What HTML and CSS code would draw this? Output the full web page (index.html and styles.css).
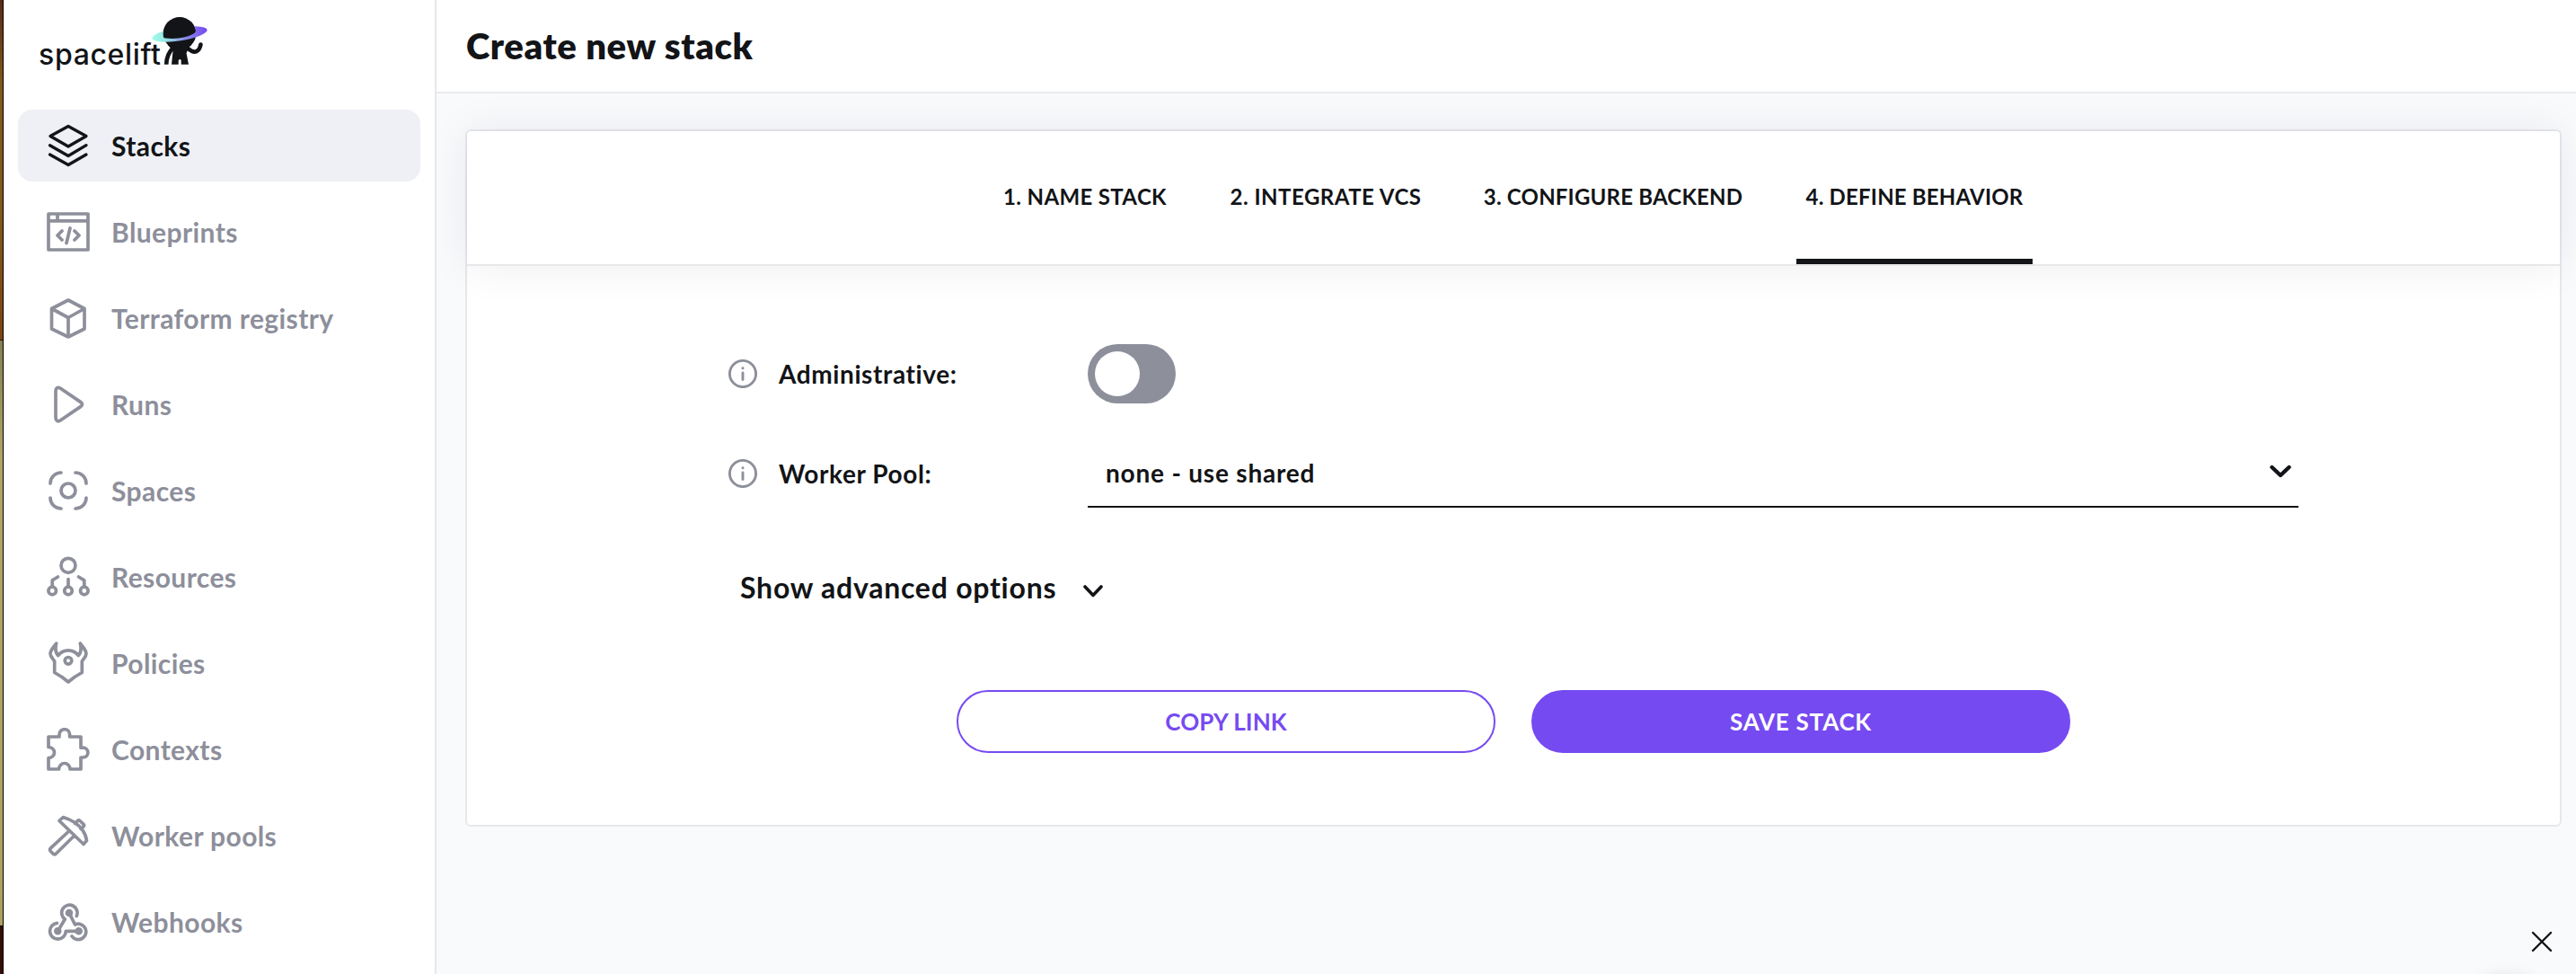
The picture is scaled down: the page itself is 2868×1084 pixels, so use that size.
FILE: index.html
```html
<!DOCTYPE html>
<html lang="en">
<head>
<meta charset="utf-8">
<title>Create new stack</title>
<link rel="stylesheet" href="styles.css">
</head>
<body>
<div class="app">
  <div class="edge" aria-hidden="true"><i class="edge-brown"></i><i class="edge-olive"></i><i class="edge-maroon"></i></div>
  <aside class="sidebar">
    <a class="logo">
      <svg width="200" height="70" viewBox="0 0 200 70">
        <defs>
          <linearGradient id="ring" x1="129" x2="191" y1="0" y2="0" gradientUnits="userSpaceOnUse">
            <stop offset="0" stop-color="#9fffe6"/><stop offset=".2" stop-color="#98eae4"/><stop offset=".55" stop-color="#8a93e6"/><stop offset="1" stop-color="#7548f3"/>
          </linearGradient>
        </defs>
        <text class="logo-text" x="3" y="55.6" textLength="136">spacelift</text>
        <circle cx="160" cy="21.3" r="18.3"/>
        <path d="M147 34h25l-4.5 9 2.5 12.700h-8.300v-4.200a1.200 1.200 0 0 0-3 0v4.200H151l1.500-15z"/>
        <path class="limb" d="M153 37Q145.500 44 145.200 55.700"/>
        <path class="limb round" d="M170 38.500C177 44.500 182 41 183.500 33.500"/>
        <ellipse cx="160" cy="22" rx="31" ry="7.400" transform="rotate(-9 160 22)" fill="url(#ring)"/>
        <path d="M142 25.500A18.300 18.300 0 1 1 178 18.600Q177 22.500 166 25.200T144.500 26.500Q142.500 26.500 142 25.500Z"/>
      </svg>
    </a>
    <nav class="nav">
      <a class="nav-item active"><svg class="ico thin" viewBox="0 0 48 48"><path d="M24 2.500 44 13.500 24 25 4 13.500ZM3.500 23.700 24 35.500 44 23.700M3.500 34 24 45.500 44 34"/></svg>Stacks</a>
      <a class="nav-item"><svg class="ico" viewBox="0 0 48 48"><path d="M2 4h44v40H2ZM2 11.800h44M12 4v8M17 23l-5 5 5 5M31 23l5 5-5 5M26 20l-4 16.500"/></svg>Blueprints</a>
      <a class="nav-item"><svg class="ico" viewBox="0 0 48 48"><path d="M24 4 42 13.500V36L24 45 5.500 36V13.500ZM5.500 13.500 24 23.500 42 13.500M24 23.500V45"/></svg>Terraform registry</a>
      <a class="nav-item"><svg class="ico" viewBox="0 0 48 48"><path d="M10 9v30c0 3.400 2.700 4.500 5 3l23-15.600c1.900-1.300 1.900-3.500 0-4.800L15 6c-2.300-1.500-5-.4-5 3Z"/></svg>Runs</a>
      <a class="nav-item"><svg class="ico" viewBox="0 0 48 48"><path d="M16 4A12 12 0 0 0 4 16M32 4a12 12 0 0 1 12 12M44 32a12 12 0 0 1-12 12M16 44A12 12 0 0 1 4 32"/><circle cx="24" cy="24" r="8"/></svg>Spaces</a>
      <a class="nav-item"><svg class="ico" viewBox="0 0 48 48"><circle cx="24" cy="11.300" r="8"/><circle cx="6.200" cy="39.500" r="4.300"/><circle cx="24" cy="39.500" r="4.300"/><circle cx="41.800" cy="39.500" r="4.300"/><path d="M24 26.500V35M12.500 24 6.200 27.800V35M35.500 24l6.300 3.800V35"/></svg>Resources</a>
      <a class="nav-item"><svg class="ico" viewBox="0 0 48 48"><path d="M10.700 2C8 6 4 9.500 4 13.500c0 3 2.500 5 4.700 8.500v12.500L17 39.500l7 5.500 7-5.500 8.300-5V22c2.200-3.500 4.700-5.500 4.700-8.500C44 9.500 40 6 37.300 2c1.300 5 1.700 9.500-2 13.500-6-7.500-16.600-7.500-22.600 0C9 11.500 9.400 7 10.700 2Z"/><circle cx="24" cy="21.300" r="3.800"/></svg>Policies</a>
      <a class="nav-item"><svg class="ico" viewBox="0 0 48 48"><path d="M2 10h12V7.500a5.800 5.800 0 0 1 11.600 0V10H38v12.200h2.500a5.300 5.300 0 0 1 0 10.800H38v13H26a6.200 6.500 0 0 0-12.400 0H2V33.500a6.500 6 0 0 0 0-12Z"/></svg>Contexts</a>
      <a class="nav-item"><svg class="ico" viewBox="0 0 48 48"><path d="M25.300 18.500 4.200 38.200q-1.200 1.500 0 3l3 3q1.500 1.200 3 0L31 23.800M14 7.500 18.300 3.500Q33 8 40 18q4 6 4.500 11.500L41 33.500ZM31.500 10.500l3-3q1.200-1.200 2.500 0l4 3.800q1.200 1.200 0 2.500L38 16.500"/></svg>Worker pools</a>
      <a class="nav-item"><svg class="ico" viewBox="0 0 48 48"><path d="M12.300 34.300 20.300 21A8.700 8.700 0 1 1 33.300 17.500M25 14l6.500 13a8.700 8.700 0 1 1-3.500 13M35.700 34.300H21.300A8.900 8.900 0 1 1 11.500 25.400"/><g class="dot"><circle cx="25" cy="14" r="3.500"/><circle cx="12.300" cy="34.300" r="3.500"/><circle cx="35.700" cy="34.300" r="3.500"/></g></svg>Webhooks</a>
    </nav>
  </aside>
  <main class="main">
    <header class="topbar"><h1>Create new stack</h1></header>
    <section class="card">
      <ol class="steps">
        <li class="step s1">1. NAME STACK</li>
        <li class="step s2">2. INTEGRATE VCS</li>
        <li class="step s3">3. CONFIGURE BACKEND</li>
        <li class="step s4 current">4. DEFINE BEHAVIOR</li>
      </ol>
      <form class="form">
        <div class="row admin">
          <svg class="info" viewBox="0 0 32 32"><circle cx="16" cy="16" r="14.600"/><path d="M16 15v7.500M16 9.800v.1"/></svg>
          <span class="label">Administrative:</span>
          <span class="toggle"><i></i></span>
        </div>
        <div class="row pool">
          <svg class="info" viewBox="0 0 32 32"><circle cx="16" cy="16" r="14.600"/><path d="M16 15v7.500M16 9.800v.1"/></svg>
          <span class="label">Worker Pool:</span>
          <span class="select">none - use shared<svg width="24" height="16" viewBox="0 0 24 16"><path d="M2.500 3 12 12 21.500 3"/></svg></span>
        </div>
        <div class="advanced">Show advanced options<svg width="22" height="14" viewBox="0 0 22 14"><path d="M2 2 11 11.500 20 2"/></svg></div>
        <div class="actions">
          <button type="button" class="btn outline">COPY LINK</button>
          <button type="button" class="btn solid">SAVE STACK</button>
        </div>
      </form>
    </section>
  </main>
  <div class="bubble" aria-hidden="true"></div>
  <svg class="close" viewBox="0 0 24 24"><path d="M2 2l20 20M22 2 2 22"/></svg>
</div>
</body>
</html>
```
FILE: styles.css
```css
* { box-sizing: border-box; }
body {
  margin: 0;
  font-family: Lato, "Open Sans", sans-serif;
  font-weight: 700;
  font-variant-ligatures: none;
  color: #121417;
}
svg { display: block; flex: none; }
.app {
  position: relative;
  display: flex;
  height: 1084px;
  overflow: hidden;
  background: #f9fafc;
}

/* strip at the window's left edge */
.edge {
  display: flex;
  flex-direction: column;
  width: 4px;
  flex: none;
  border-right: 1px solid #000;
}
.edge-brown { height: 379px; background: linear-gradient(#5a2b18, #80591a 25%, #84591a 60%, #7d4411); border-bottom: 1px solid #2a1505; }
.edge-olive { height: 651px; background: linear-gradient(#858050, #b0a565 20%, #aca260); }
.edge-maroon { flex: 1; background: #370c05; border-top: 1px solid #150301; }

/* sidebar */
.sidebar {
  width: 482px;
  flex: none;
  padding: 16px 16px 0;
  background: #fff;
  border-right: 2px solid #e7e7ec;
  position: relative;
  z-index: 2;
}
.logo { display: block; height: 106px; padding-left: 20px; fill: #121417; }
.logo-text { font: 500 32px Inter, sans-serif; }
.limb { fill: none; stroke: #121417; stroke-width: 4.6; }
.round { stroke-linecap: round; }
.nav { display: flex; flex-direction: column; gap: 16px; }
.nav-item {
  display: flex;
  align-items: center;
  gap: 24px;
  height: 80px;
  width: 448px;
  padding-left: 32px;
  border-radius: 16px;
  font-size: 30px;
  letter-spacing: .4px;
  color: #8d8f9b;
}
.nav-item.active { background: #eff0f5; color: #121417; }
.ico {
  width: 48px;
  height: 48px;
  fill: none;
  stroke: currentColor;
  stroke-width: 3.7;
  stroke-linecap: round;
  stroke-linejoin: round;
}
.thin { stroke-width: 3.3; }
.dot { fill: currentColor; stroke-width: 1.5; }

/* main area */
.main { flex: 1; min-width: 0; }
.topbar {
  position: relative;
  z-index: 1;
  height: 104px;
  display: flex;
  align-items: center;
  padding-left: 33px;
  background: #fff;
  border-bottom: 2px solid #e9eaec;
}
h1 { margin: 0; font-size: 40px; line-height: 48px; font-weight: 800; letter-spacing: .6px; }
.card {
  margin: 40px 16px 0 32px;
  height: 776px;
  background: #fff;
  border: 2px solid #e7e8ec;
  border-radius: 6px;
}
.steps {
  margin: 0;
  padding: 0;
  list-style: none;
  display: flex;
  justify-content: center;
  gap: 51px;
  height: 150px;
  background: #fff;
  border-bottom: 2px solid #e7e8ea;
  border-radius: 4px 4px 0 0;
  box-shadow: 0 0 48px rgba(20, 22, 50, .08);
}
.step {
  display: flex;
  align-items: center;
  justify-content: center;
  height: 148px;
  padding-top: 3px;
  font-size: 24px;
  letter-spacing: .2px;
  white-space: nowrap;
  border-bottom: 6px solid transparent;
}
.s1 { width: 202px; letter-spacing: .35px; }
.s2 { width: 232px; letter-spacing: .5px; }
.s3 { width: 306px; }
.s4 { width: 263px; }
.step.current { border-color: #121417; }
.form { padding: 87px 291px 0; }
.row { display: flex; align-items: center; }
.admin { height: 66px; }
.pool { height: 76px; margin-top: 40px; }
.info {
  width: 32px;
  height: 32px;
  fill: none;
  stroke: #8d8f9b;
  stroke-width: 2.9;
  stroke-linecap: round;
}
.label { width: 344px; margin-left: 24px; font-size: 28px; letter-spacing: .6px; }
.toggle { width: 98px; height: 66px; padding: 8px; border-radius: 33px; background: #8d8f9b; }
.toggle i { display: block; width: 50px; height: 50px; border-radius: 50%; background: #fff; }
.select {
  flex: 1;
  height: 76px;
  display: flex;
  align-items: center;
  justify-content: space-between;
  padding: 0 8px 0 20px;
  border-bottom: 2px solid #121417;
  font-size: 28px;
  letter-spacing: .8px;
}
.select svg, .advanced svg { fill: none; stroke: #121417; stroke-width: 4.4; stroke-linecap: round; stroke-linejoin: round; }
.select svg { margin-top: -3px; }
.advanced {
  display: flex;
  align-items: center;
  gap: 30px;
  height: 48px;
  margin: 64px 0 0 13px;
  font-size: 32px;
  letter-spacing: .75px;
}
.advanced svg { margin-top: 9px; stroke-width: 3.6; }
.actions { display: flex; justify-content: center; gap: 40px; margin-top: 91px; }
.btn {
  width: 600px;
  height: 70px;
  padding: 0;
  border: 2px solid #764af1;
  border-radius: 35px;
  font: inherit;
  font-size: 26px;
  font-variant-ligatures: none;
}
.outline { background: #fff; color: #764af1; letter-spacing: .1px; }
.solid { background: #764af1; color: #fff; letter-spacing: .75px; }

/* chat launcher controls floating over the page */
.close { position: absolute; right: 26px; bottom: 24px; width: 24px; height: 24px; fill: none; stroke: #121417; stroke-width: 2.4; stroke-linecap: round; }
.bubble { position: absolute; right: 26px; bottom: -108px; width: 104px; height: 104px; border-radius: 50%; box-shadow: 0 0 20px rgba(0, 0, 0, .12); }
```
